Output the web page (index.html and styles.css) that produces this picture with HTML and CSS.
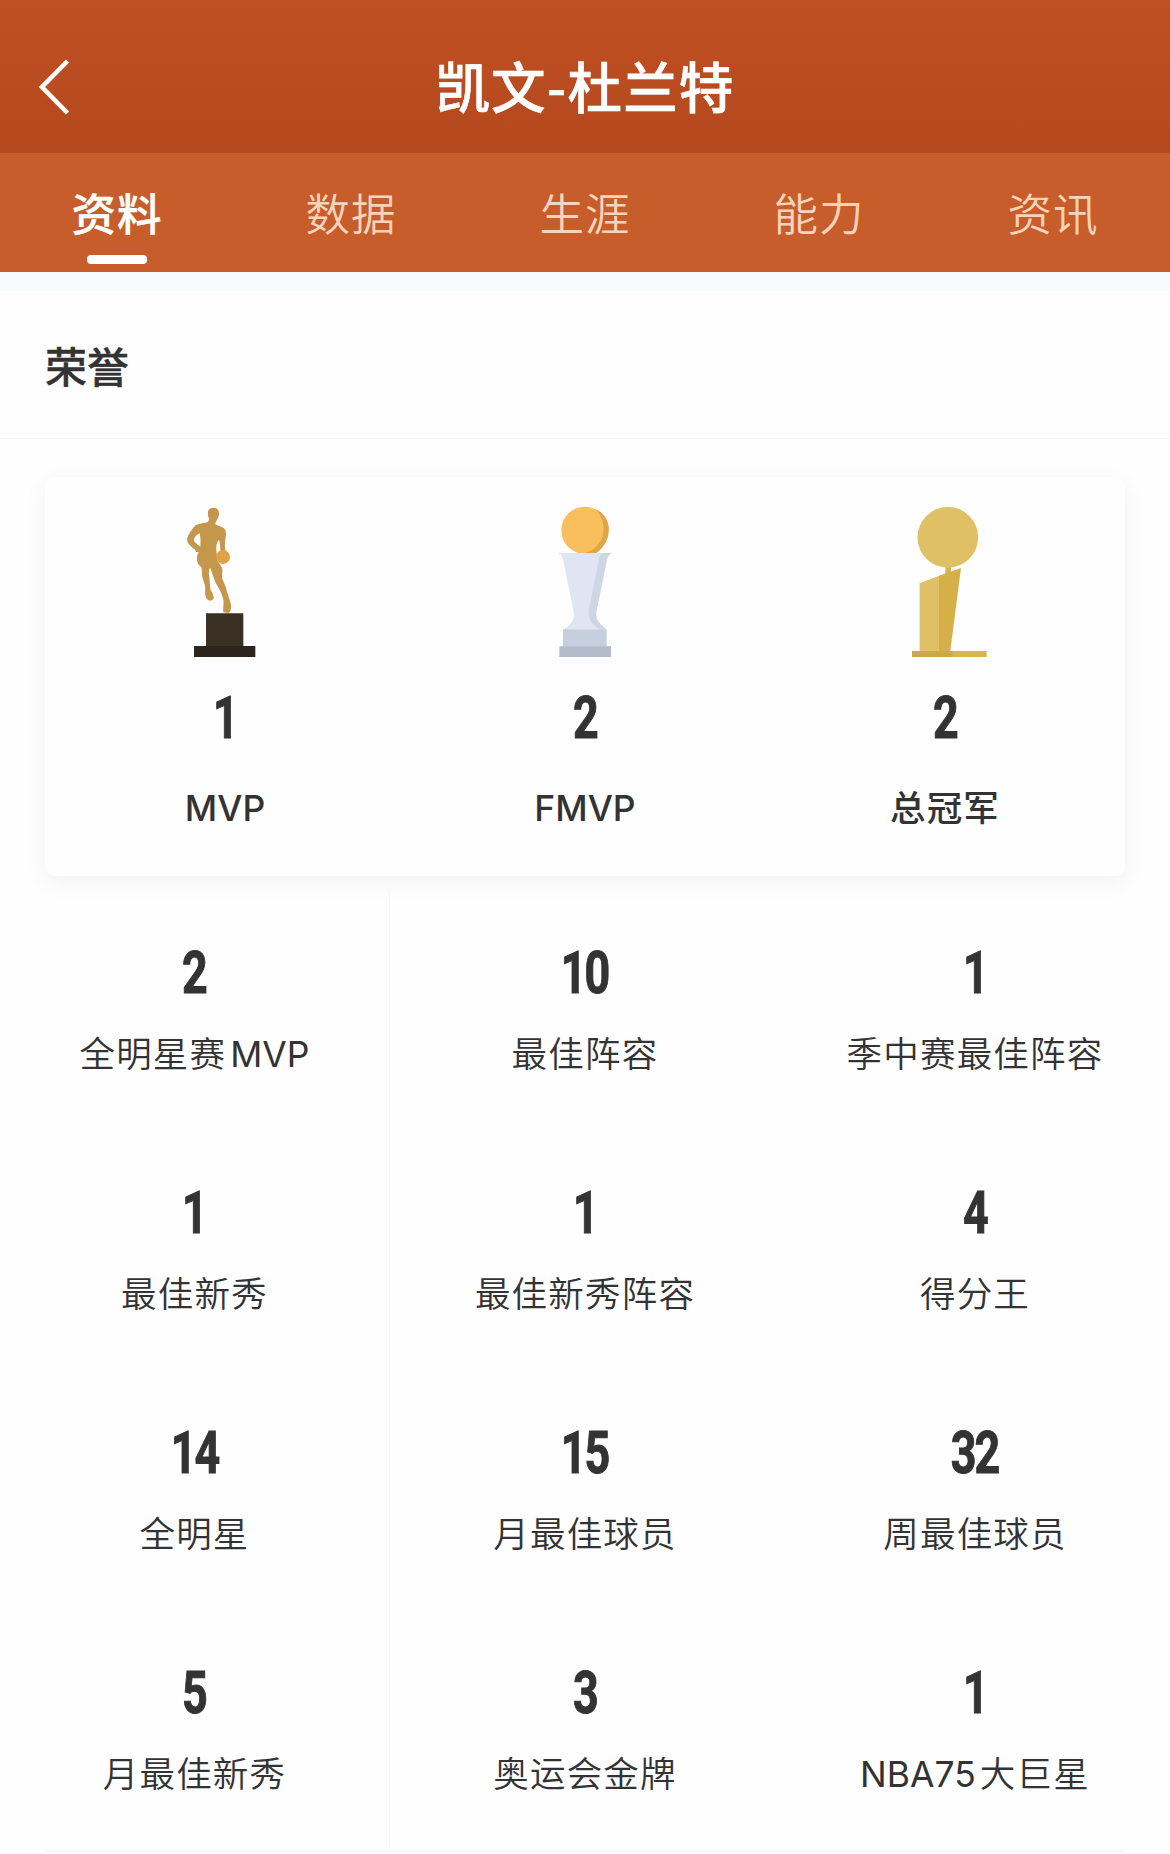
FILE: index.html
```html
<!DOCTYPE html>
<html lang="zh-CN">
<head>
<meta charset="UTF-8">
<title>凯文-杜兰特</title>
<link rel="stylesheet" href="styles.css">
</head>
<body>
<header class="header">
  <svg class="back" viewBox="0 0 36 64" width="36" height="64"><path d="M31.500 6 6 32 31.500 58" fill="none" stroke="#fff" stroke-width="4.600"/></svg>
  <h1 class="name">凯文-杜兰特</h1>
</header>
<nav class="tabs">
  <a class="tab active">资料</a>
  <a class="tab">数据</a>
  <a class="tab">生涯</a>
  <a class="tab">能力</a>
  <a class="tab">资讯</a>
</nav>
<main class="content">
  <h2 class="section-title">荣誉</h2>
  <section class="trophies">
    <div class="trophy">
      <svg class="icon" viewBox="0 0 390 570" width="130" height="190">
        <path fill="#c4974a" d="M144 66C145 57 152 53 160 53C171 53 178 60 177 72C176 83 171 90 167 96L166 103C177 110 193 109 197 124C200 139 193 153 195 170L196 184L181 186C182 172 180 162 177 149C169 157 169 169 169 181L172 212C178 220 184 227 187 238C188 249 184 255 187 266L198 293C200 309 211 327 213 346C214 357 211 366 205 369L190 367C188 355 192 345 190 329C186 309 176 294 167 278C161 263 156 249 151 234C147 234 147 243 147 255C150 275 149 286 152 300C157 309 162 316 161 325C158 333 147 335 141 327C132 316 137 302 135 287C130 271 124 258 126 242L124 232C114 224 109 212 111 200C113 191 116 187 116 186L108 186L104 177C96 173 82 160 81 149C82 137 96 118 104 108C114 99 132 101 144 95L148 87C144 81 143 73 144 66ZM119 130C109 135 103 141 101 151C105 160 114 164 121 170C122 156 122 142 119 130Z"/>
        <circle cx="189" cy="201" r="21" fill="#dfa348"/>
        <path fill="#3b3024" d="M138 370H250V469H138Z"/>
        <path fill="#2d241d" d="M102 468H286V501H102Z"/>
      </svg>
      <b class="num">1</b>
      <span class="label"><span class="latin">MVP</span></span>
    </div>
    <div class="trophy">
      <svg class="icon" viewBox="0 0 330 570" width="110" height="190">
        <circle cx="165" cy="121" r="71" fill="#f9bf5d"/>
        <path fill="#dfa54b" d="M196 58C228 72 241 101 235 131C232 155 218 176 198 190H160C190 183 212 162 219 134C225 106 216 78 196 58Z"/>
        <path fill="#dfe5f2" d="M86 189H244C234 196 231 205 229 218L201 355C195 382 199 395 229 418H100C128 400 136 388 130 359L102 223C99 206 97 196 86 189Z"/>
        <path fill="#cfd6e3" d="M216 189H244C234 196 231 205 229 218L201 355C195 382 199 395 229 418H210C175 396 173 374 178 350L205 218C207 205 208 196 216 189Z"/>
        <path fill="#c6cfdd" d="M99 418H230V470H99Z"/>
        <path fill="#b4bccb" d="M88 469H243V501H88Z"/>
      </svg>
      <b class="num">2</b>
      <span class="label"><span class="latin">FMVP</span></span>
    </div>
    <div class="trophy">
      <svg class="icon" viewBox="-15 0 360 570" width="120" height="190">
        <path fill="#d8b550" d="M166 225H183V260H166Z"/>
        <circle cx="173.500" cy="142" r="91" fill="#dfc064"/>
        <path fill="#dfc064" d="M89 280 148 257V490H89Z"/>
        <path fill="#d5b049" d="M147 257 213 234 180 490H147Z"/>
        <path fill="#d8b64f" d="M66 483H290V501H66Z"/>
        <path fill="#cda944" d="M66 483H187V501H66Z"/>
      </svg>
      <b class="num">2</b>
      <span class="label">总冠军</span>
    </div>
  </section>
  <section class="grid">
    <div class="cell"><b class="num">2</b><span class="label">全明星赛<i class="thin"></i><span class="latin">MVP</span></span></div>
    <div class="cell"><b class="num">10</b><span class="label">最佳阵容</span></div>
    <div class="cell"><b class="num">1</b><span class="label">季中赛最佳阵容</span></div>
    <div class="cell"><b class="num">1</b><span class="label">最佳新秀</span></div>
    <div class="cell"><b class="num">1</b><span class="label">最佳新秀阵容</span></div>
    <div class="cell"><b class="num">4</b><span class="label">得分王</span></div>
    <div class="cell"><b class="num">14</b><span class="label">全明星</span></div>
    <div class="cell"><b class="num">15</b><span class="label">月最佳球员</span></div>
    <div class="cell"><b class="num">32</b><span class="label">周最佳球员</span></div>
    <div class="cell"><b class="num">5</b><span class="label">月最佳新秀</span></div>
    <div class="cell"><b class="num">3</b><span class="label">奥运会金牌</span></div>
    <div class="cell"><b class="num">1</b><span class="label"><span class="latin">NBA75</span><i class="thin"></i>大巨星</span></div>
  </section>
  <div class="divider"></div>
</main>
</body>
</html>
```
FILE: styles.css
```css
* { box-sizing: border-box; }
body {
  margin: 0;
  width: 1170px;
  height: 1854px;
  overflow: hidden;
  background: #fefefe;
  color: #333;
  font-family: Inter, "Noto Sans CJK SC", sans-serif;
}
.header {
  height: 153px;
  padding: 21px 36px 0;
  display: grid;
  grid-template-columns: 40px 1fr 40px;
  align-items: center;
  background: linear-gradient(#bf5023, #b5481e);
  color: #fff;
}
.back { display: block; }
.name {
  margin: 0;
  padding-bottom: 4px;
  text-align: center;
  font: 500 54.5px/80px "Noto Sans CJK SC", sans-serif;
  letter-spacing: 1.2px;
  -webkit-text-stroke: .6px #fff;
}
.tabs {
  height: 119px;
  display: grid;
  grid-template-columns: repeat(5, 1fr);
  background: #c65d2a;
}
.tab {
  display: flex;
  flex-direction: column;
  align-items: center;
  padding-top: 26px;
  color: #fbd3bc;
  font: 350 44.5px/66px "Noto Sans CJK SC", sans-serif;
  letter-spacing: 1px;
}
.active { color: #fff; font-weight: 500; -webkit-text-stroke: .4px #fff; }
.active::after {
  content: "";
  width: 60px;
  height: 9px;
  margin-top: 10px;
  border-radius: 4px;
  background: #fff;
}
.content { border-top: 19px solid #f9fafc; }
.section-title {
  margin: 0;
  height: 148px;
  padding-left: 45px;
  border-bottom: 1px solid #f7f7f7;
  font: 500 42px/147px "Noto Sans CJK SC", sans-serif;
  -webkit-text-stroke: .4px #333;
}
.trophies {
  height: 399px;
  margin: 38px 45px 0;
  display: grid;
  grid-template-columns: repeat(3, 1fr);
  border-radius: 9px;
  background: #fefefe;
  box-shadow: 0 6px 24px rgba(0, 0, 0, .055);
}
.trophy, .cell {
  display: flex;
  flex-direction: column;
  align-items: center;
}
.trophy { padding-top: 13px; font-weight: 500; }
.icon { display: block; }
.num {
  padding-right: 1px;
  font: 700 59px/60px Roboto, sans-serif;
  letter-spacing: -2.5px;
  -webkit-text-stroke: 1px #333;
  transform: scaleX(.76);
}
.label {
  font-size: 35.5px;
  line-height: 52px;
  letter-spacing: 1.2px;
  white-space: nowrap;
}
.latin { letter-spacing: 0; }
.trophy .num { margin-top: 8px; }
.trophy .label { margin-top: 35px; }
.grid {
  display: grid;
  grid-template-columns: repeat(3, 390px);
  grid-auto-rows: 240px;
  margin-top: 15px;
}
.cell { padding-top: 52px; }
.cell .label { margin-top: 26px; font-weight: 350; }
.cell .latin { font-weight: 400; }
.cell:nth-child(3n+1) { border-right: 1px solid #f7f7f7; }
.thin { display: inline-block; width: 4px; }
.divider { height: 2px; margin: -1px 46px 0; background: #f8f8f8; }
```
